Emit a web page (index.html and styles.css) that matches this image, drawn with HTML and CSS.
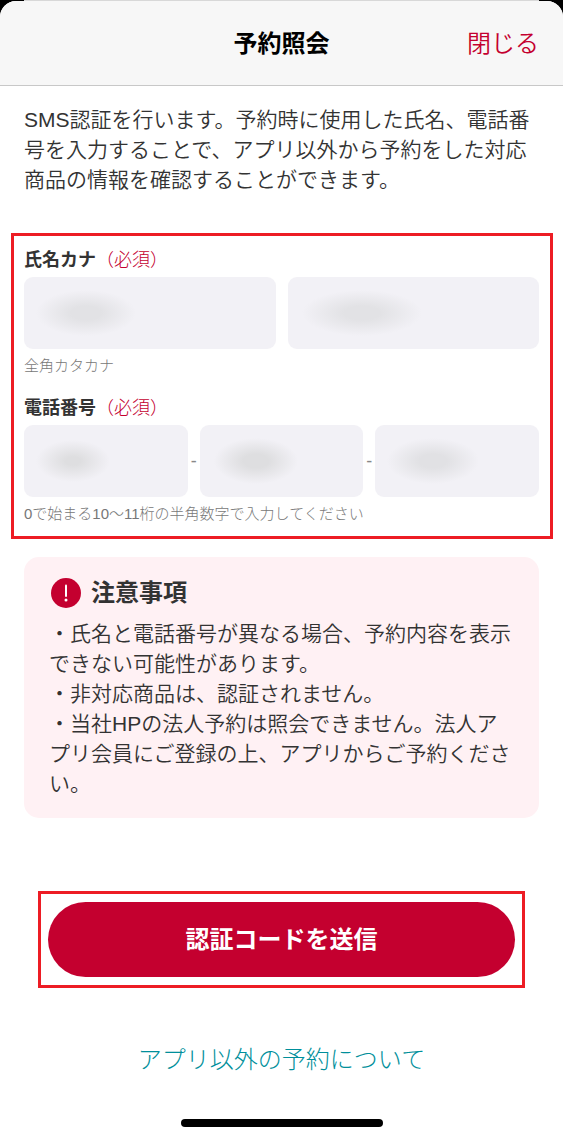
FILE: index.html
```
<!DOCTYPE html>
<html lang="ja">
<head>
    <meta charset="UTF-8">
    <meta name="viewport" content="width=device-width, initial-scale=1.0">
    <title>予約照会</title>
    <link rel="stylesheet" href="styles.css">
</head>
<body>
    <div class="backdrop"></div>
    <div class="sheet">
        <header class="header">
            <h1 class="title">予約照会</h1>
            <button type="button" class="close">閉じる</button>
        </header>

        <form class="content">
            <p class="intro">SMS認証を行います。予約時に使用した氏名、電話番号を入力することで、アプリ以外から予約をした対応商品の情報を確認することができます。</p>

            <div class="highlight fields">
                <!-- Name -->
                <fieldset class="group">
                    <legend class="label">氏名カナ<span class="required">（必須）</span></legend>
                    <div class="row">
                        <input class="input mask-sei" type="text" aria-label="セイ" required>
                        <input class="input mask-mei" type="text" aria-label="メイ" required>
                    </div>
                    <p class="hint">全角カタカナ</p>
                </fieldset>
                <!-- Phone -->
                <fieldset class="group">
                    <legend class="label">電話番号<span class="required">（必須）</span></legend>
                    <div class="row phone">
                        <input class="input mask-tel1" type="tel" aria-label="電話番号1" required>
                        <span class="dash">-</span>
                        <input class="input mask-tel2" type="tel" aria-label="電話番号2" required>
                        <span class="dash">-</span>
                        <input class="input mask-tel3" type="tel" aria-label="電話番号3" required>
                    </div>
                    <p class="hint">0で始まる10〜11桁の半角数字で入力してください</p>
                </fieldset>
            </div>

            <section class="notice">
                <h2 class="notice-title">
                    <svg class="notice-icon" viewBox="0 0 30 30" aria-hidden="true">
                        <circle cx="15" cy="15" r="15" fill="#c4002f"/>
                        <path d="M15 7.5v10.5" stroke="#fff" stroke-width="2" stroke-linecap="round"/>
                        <circle cx="15" cy="22" r="1.5" fill="#fff"/>
                    </svg>
                    注意事項
                </h2>
                <p>・氏名と電話番号が異なる場合、予約内容を表示できない可能性があります。</p>
                <p>・非対応商品は、認証されません。</p>
                <p>・当社HPの法人予約は照会できません。法人アプリ会員にご登録の上、アプリからご予約ください。</p>
            </section>

            <div class="highlight action">
                <button type="submit" class="submit">認証コードを送信</button>
            </div>

            <a class="about" href="#">アプリ以外の予約について</a>
        </form>

        <div class="home-bar"></div>
    </div>
</body>
</html>
```
FILE: styles.css
```
* {
    box-sizing: border-box;
}

body {
    margin: 0;
    background-color: #000;
    color: #333;
    font-family: "Liberation Sans", "Noto Sans CJK JP", sans-serif;
    font-size: 21px;
    font-weight: 350;
    line-height: 30px;
}

h1, h2, p {
    margin: 0;
}

button, input {
    font-family: inherit;
    line-height: 30px;
}

/* Edge of the screen behind the sheet */
.backdrop {
    height: 1px;
    margin: 0 24px;
    background-color: #d8d8d8;
}

.sheet {
    display: flex;
    flex-direction: column;
    min-height: calc(100vh - 1px);
    background-color: #fff;
    border-radius: 16px 16px 0 0;
    overflow: hidden;
}

.header {
    display: grid;
    grid-template-columns: 1fr auto 1fr;
    align-items: center;
    height: 85px;
    padding: 2px 24px 0;
    background-color: #f7f7f7;
    border-bottom: 1px solid #c8c8c8;
}

.title {
    grid-column: 2;
    color: #000;
    font-size: 24px;
    font-weight: 700;
}

.close {
    justify-self: end;
    padding: 0;
    border: none;
    background: none;
    color: #c4002f;
    font-size: 24px;
    font-weight: 350;
    cursor: pointer;
}

.content {
    display: flex;
    flex-direction: column;
    padding: 19px 24px;
}

/* Red frames around the areas to fill in and press */
.highlight {
    border: 3px solid #ed1c24;
}

.fields {
    margin: 38px -14px 0 -13px;
    padding: 9px 11px 10px 10px;
}

.group {
    min-width: 0;
    margin: 0;
    padding: 0;
    border: none;
}

.group + .group {
    margin-top: 15px;
}

.label {
    margin-bottom: 2px;
    padding: 0;
    font-size: 18px;
    font-weight: 700;
}

.required {
    color: #c4002f;
    font-weight: 300;
}

.row {
    display: flex;
    gap: 12px;
}

.phone {
    gap: 0;
    align-items: center;
}

.input {
    flex: 1;
    min-width: 0;
    height: 72px;
    padding: 0 24px;
    border: none;
    border-radius: 9px;
    background-color: #f2f1f6;
    background-repeat: no-repeat;
    color: #333;
    font-size: 21px;
}

/* Masked values */
.mask-sei {
    background-image: radial-gradient(closest-side, #e2e2e5 30%, #f2f1f6);
    background-size: 100px 46px;
    background-position: 12px 13px;
}

.mask-mei {
    background-image: radial-gradient(closest-side, #e2e2e5 30%, #f2f1f6);
    background-size: 120px 46px;
    background-position: 14px 13px;
}

.mask-tel1 {
    background-image: radial-gradient(closest-side, #dedee0 20%, #f2f1f6);
    background-size: 74px 42px;
    background-position: 12px 15px;
}

.mask-tel2 {
    background-image: radial-gradient(closest-side, #dedee0 30%, #f2f1f6);
    background-size: 84px 46px;
    background-position: 14px 13px;
}

.mask-tel3 {
    background-image: radial-gradient(closest-side, #e1e1e4 30%, #f2f1f6);
    background-size: 92px 46px;
    background-position: 12px 13px;
}

.dash {
    width: 12px;
    color: #888;
    font-size: 18px;
    text-align: center;
}

.hint {
    margin-top: 5px;
    color: #777;
    font-size: 15px;
    font-weight: 300;
    line-height: 24px;
}

.notice {
    margin-top: 18px;
    padding: 21px 25px 19px;
    border-radius: 15px;
    background-color: #fff1f4;
}

.notice-title {
    display: flex;
    align-items: center;
    gap: 10px;
    margin-bottom: 11px;
    padding-left: 2px;
    font-size: 24px;
    font-weight: 700;
}

.notice-icon {
    width: 30px;
    height: 30px;
}

.action {
    margin: 73px 14px 0;
    padding: 8px 7px;
}

.submit {
    display: block;
    width: 100%;
    height: 75px;
    border: none;
    border-radius: 38px;
    background-color: #c4002f;
    color: #fff;
    font-size: 24px;
    font-weight: 700;
    cursor: pointer;
}

.about {
    align-self: center;
    margin-top: 57px;
    color: #008f9b;
    font-size: 24px;
    font-weight: 300;
    text-decoration: none;
}

.home-bar {
    width: 202px;
    height: 8px;
    margin: auto auto 12px;
    border-radius: 4px;
    background-color: #000;
}
```
